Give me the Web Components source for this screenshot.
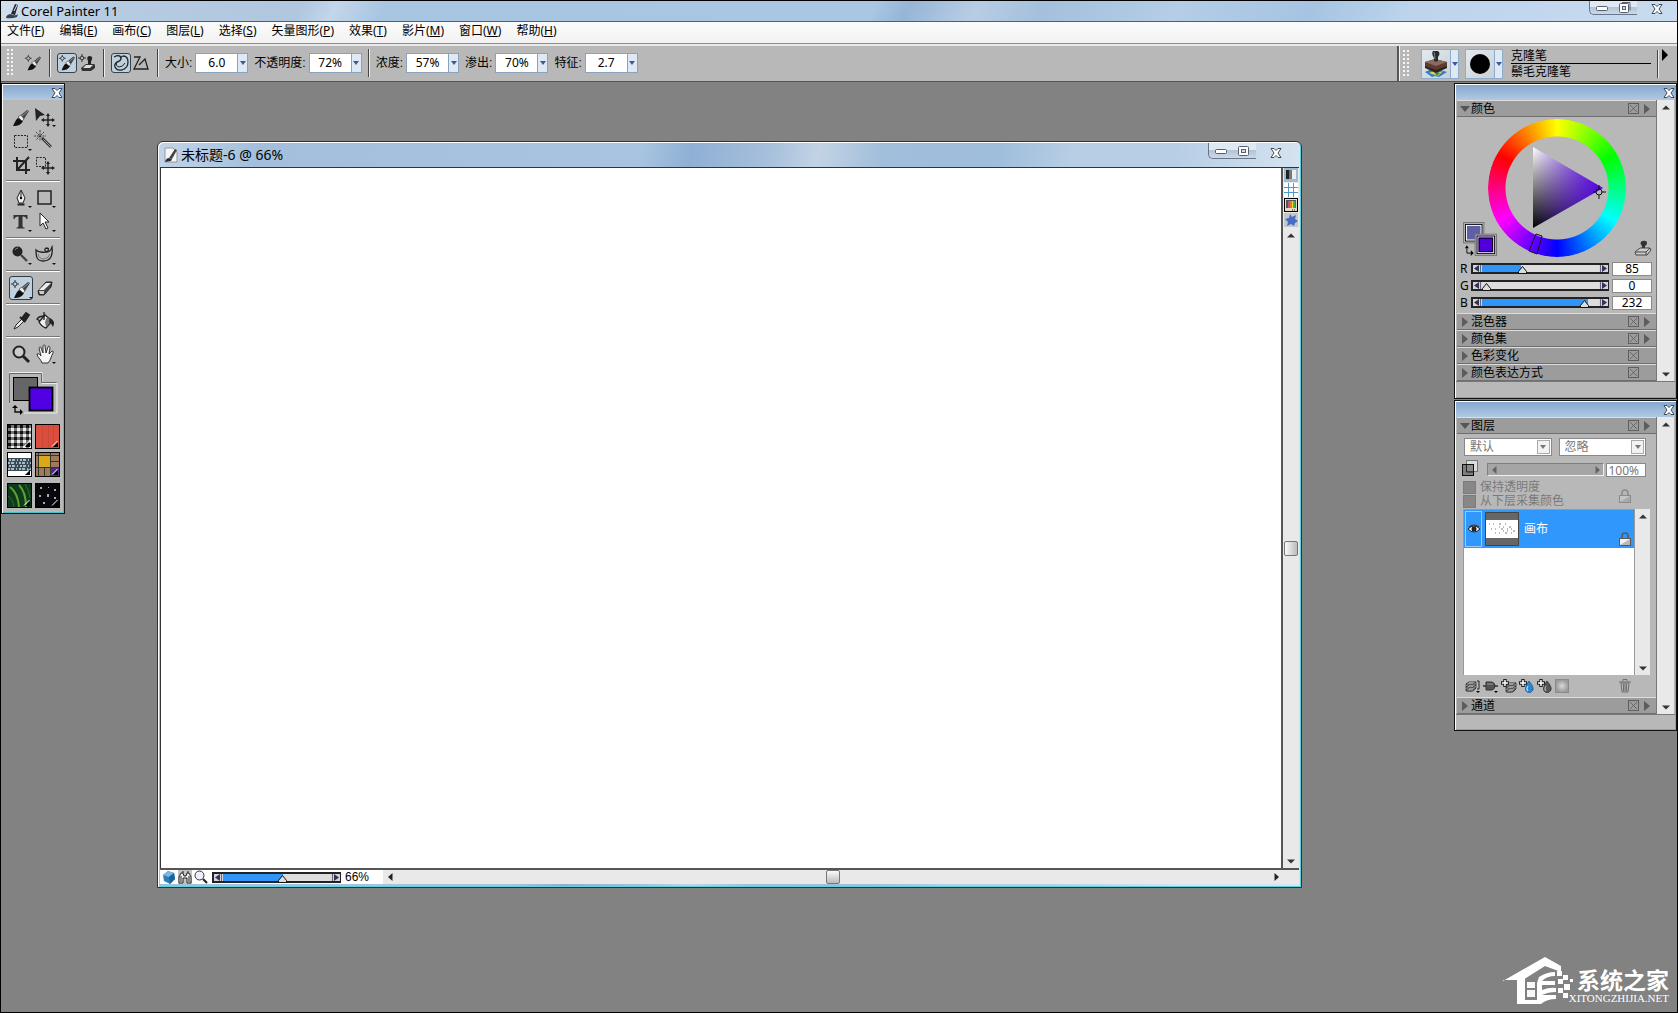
<!DOCTYPE html>
<html lang="zh-CN">
<head>
<meta charset="utf-8">
<title>Corel Painter 11</title>
<style>
  html, body { margin: 0; height: 100%; background: #000; }
  body { font: 12px/16px "Noto Sans", "Noto Sans CJK SC", sans-serif; color: #000; overflow: hidden; }
</style>
</head>
<body>
<painter-app></painter-app>
<script>
const BASE = `
  *, *::before, *::after { box-sizing: border-box; }
  button, input, select { font: inherit; color: inherit; margin: 0; padding: 0; border: 0; border-radius: 0; background: none; outline: 0; }
  button { display: grid; place-items: center; }
  h1, h2 { margin: 0; font: inherit; }
`;

/* Base element: renders css() and html() into an open shadow root. */
class PainterElement extends HTMLElement {
  constructor() { super(); this.attachShadow({ mode: 'open' }); }
  connectedCallback() {
    const t = document.createElement('template');
    t.innerHTML = `<style>${BASE}${this.css()}</style>${this.html()}`;
    this.shadowRoot.replaceChildren(t.content.cloneNode(true));
  }
  attr(name, fallback = '') { return this.getAttribute(name) ?? fallback; }
  css() { return ':host{display:block}'; }
  html() { return '<slot></slot>'; }
}

const BRUSH = '<path d="M4 21c1-1 2-6 5-8l5 3c-2 4-5 5-10 5z" fill="#111"/><path d="M9 12l3-2 3 4-2 2z" fill="#eee" stroke="#333" stroke-width=".6"/><path d="M12 10l6-5 2 1-5 8z" fill="#444"/><path d="M13 11l6-5" stroke="#aaa" stroke-width=".8"/>';
const TARGET = '<circle cx="5" cy="7" r="2" fill="none" stroke="#333"/><path d="M5 3v2M5 9v2M1 7h2M7 7h2" stroke="#333"/>';
const FLY = '<path d="M19 20h4l-2 2z" fill="#111"/>';
const MOVE = '<path d="M15 9v12M9 15h12" stroke="#222" stroke-width="1.5"/><path d="M13 11l2-3 2 3zM13 19l2 3 2-3zM11 13l-3 2 3 2zM19 13l3 2-3 2z" fill="#222"/>';
const LOCK = '<path d="M3 7V4q0-3 3-3t3 3v3" fill="none" stroke="C" stroke-width="1.6"/><rect x=".5" y="6.500" width="11" height="7" fill="F" stroke="C"/><path d="M1 13l10-6v6z" fill="G"/>';
const BOOK = '<path d="M1 11l3-2h7l-3 2zM1 8l3-2h7l-3 2zM1 5l3-2h7L8 5z" fill="#fff" stroke="#333"/><path d="M1 5v7q4 1 7 0l3-3V3" fill="none" stroke="#333" stroke-width=".8"/>';
const PLUS = '<path d="M4 0v8M0 4h8" stroke="#222" stroke-width="3.500"/><path d="M4 1v6M1 4h6" stroke="#fff" stroke-width="1.500"/>';
/* name: [width, height, markup, viewBox] */
const ICONS = {
  app: [14, 16, '<path d="M1 15q0-3 4-4l3 1q3 1 5-1l-1 3q-5 2-11 1z" fill="#38424f"/><path d="M6 11l4-10 3 1-3 10z" fill="#25272c"/><path d="M9 8l3-6" stroke="#dfe7f0" fill="none"/>'],
  doc: [14, 16, '<path d="M1 1h8l4 4v10H1z" fill="#f6f6f6" stroke="#999"/><path d="M1 15q1-4 4-4l3 1-1 2z" fill="#27303a"/><path d="M5 11l6-9 2 1-5 9z" fill="#444"/>'],
  min: [12, 6, '<rect x=".5" y=".5" width="11" height="4" rx="1" fill="#fff" stroke="#56606e"/>'],
  max: [12, 10, '<rect x=".5" y=".5" width="10" height="9" rx="1" fill="#fff" stroke="#56606e"/><rect x="3.500" y="3.500" width="4" height="3" fill="#cfdcea" stroke="#56606e"/>'],
  restore: [12, 11, '<path d="M3 .5h8v8" fill="none" stroke="#56606e"/><rect x=".5" y="1.500" width="9" height="9" rx="1" fill="#fff" stroke="#56606e"/><rect x="3.500" y="4.500" width="3" height="3" fill="#cfdcea" stroke="#56606e"/>'],
  close: [12, 10, '<path d="M1 .5h3l2 2 2-2h3L8 5l3 4.500H8l-2-2-2 2H1L4 5z" fill="#fff" stroke="#414a58"/>'],
  brush: [24, 24, BRUSH],
  clonebrush: [18, 18, TARGET + BRUSH, '0 2 21 21'],
  toolbrush: [24, 24, TARGET + BRUSH + FLY],
  stampbrush: [18, 18, '<circle cx="4" cy="4" r="1.800" fill="none" stroke="#333"/><path d="M4 0v2M4 6v2M0 4h2M6 4h2" stroke="#333"/><path d="M10 7q-2-4 1-5 4 0 3 3l-1 3v3H10z" fill="#222"/><path d="M3 14l5-4h8l1 1v3l-4 3H4z" fill="#333"/><path d="M5 14l3-3h7l-3 3z" fill="#ddd"/>'],
  freehand: [18, 18, '<path d="M2 3q6-3 7 1 0 3-4 4-3 2-2 5 2 4 7 3 6-2 6-8 0-6-5-6-3 1-2 4" fill="none" stroke="#222" stroke-width="1.300"/><path d="M5 8q-2 4 2 5 4 0 6-4" fill="none" stroke="#222"/>'],
  poly: [18, 18, '<path d="M2 3h6L2 15h14L13 5l-6 6" fill="none" stroke="#222" stroke-width="1.300"/>'],
  move: [24, 24, '<path d="M2 3l10 7-5 1-4 5z" fill="#222"/>' + MOVE + FLY],
  marquee: [24, 24, '<rect x="5.500" y="6.500" width="13" height="12" fill="none" stroke="#222" stroke-dasharray="2 1.200"/>' + FLY],
  wand: [24, 24, '<path d="M9 9l9 9" stroke="#333" stroke-width="2.600"/><path d="M10 10l8 8" stroke="#ccc" stroke-width=".7"/><path d="M7 1v11M1 7h12M3 3l8 8M11 3l-8 8" stroke="#222" stroke-width=".8" stroke-dasharray="2 .8"/>'],
  crop: [24, 24, '<path d="M8 4v13h13M4 8h13v13M9 16L20 4" fill="none" stroke="#222" stroke-width="2"/><path d="M9 16L20 4" stroke="#222"/>'],
  selmove: [24, 24, '<rect x="3.500" y="4.500" width="9" height="9" fill="none" stroke="#222" stroke-dasharray="2 1.200"/>' + MOVE],
  pen: [24, 24, '<path d="M12 4l4 8-2 5h-4l-2-5z" fill="#eee" stroke="#222"/><path d="M12 5v7" stroke="#222"/><circle cx="12" cy="12" r="1.200"/><path d="M8.500 17.500h7v2h-7z" fill="#222"/>' + FLY],
  rect: [24, 24, '<rect x="5" y="5" width="13" height="13" fill="none" stroke="#222" stroke-width="1.500"/>' + FLY],
  pointer: [24, 24, '<path d="M7 3v13l3-3 3 6 2-1-3-6h4z" fill="#fff" stroke="#222"/>' + FLY],
  text: [24, 24, '<path d="M4.500 5h14v4h-1q-.5-2.500-3-2.500h-1V16q0 1.500 2 1.500v1h-8v-1q2 0 2-1.500V6.500h-1Q6 6.500 5.500 9h-1z" fill="#333"/>' + FLY],
  dodge: [24, 24, '<circle cx="8.500" cy="8.500" r="5" fill="#222"/><path d="M6 7q1-2 3-2" stroke="#888" fill="none"/><path d="M12 12l6 6" stroke="#444" stroke-width="2.400"/>' + FLY],
  horn: [24, 24, '<path d="M3 7q3 3 9 2c5-1 4-4 1-4-2 1-1 4 1 4 4 0 4-3 5-5 1 8-1 14-9 14-7 0-7-6-7-11z" fill="#bbb" stroke="#222" stroke-width="1.300"/><path d="M5 11q1 5 6 5 5-1 6-5" fill="none" stroke="#777"/>' + FLY],
  eraser: [24, 24, '<path d="M5 15L13 6h6l-1 5-7 8H6z" fill="#444" stroke="#222"/><path d="M6 14l7-7h5l-7 7z" fill="#eee"/><path d="M6 15h5v3H7z" fill="#ccc"/>'],
  dropper: [24, 24, '<path d="M5 20l2-4 6-6 2 2-6 6z" fill="#eee" stroke="#222"/><path d="M11 8l5 5M13 9l4-5 3 2-4 6z" fill="#222" stroke="#222" stroke-width="1.800"/>'],
  bucket: [24, 24, '<path d="M6 13l6-7 7 6-6 7q-4-1-7-6z" fill="#eee" stroke="#222" stroke-width="1.300"/><path d="M14 8l4 4-5 6-1-5z" fill="#777"/><path d="M7 12L4 10q2-3 8-3M11 3v8" fill="none" stroke="#222" stroke-width="1.300"/><path d="M17 9q6 3 3 9-1-3-4-5z" fill="#222"/>'],
  zoom: [24, 24, '<circle cx="10" cy="10" r="5.500" fill="#ccc" stroke="#222" stroke-width="2"/><path d="M14 14l6 6" stroke="#222" stroke-width="3"/>'],
  hand: [24, 24, '<path d="M9 21c-1-4-5-6-5-9 2-1 3 1 4 2L6 6c1-2 2-1 2 0l2 5V4c1-2 2-1 2 0l1 7 2-6c1-2 2 0 2 1l-1 6 3-3c2 0 1 1 1 2-2 3-2 7-5 10z" fill="#f4f4f4" stroke="#222" stroke-width=".9"/>' + FLY],
  stamp: [18, 17, '<path d="M8 6Q5 3 8 1q5-1 5 2 0 2-2 3v4H8z" fill="#333"/><path d="M1 12l5-4h10l1 2-4 5H2z" fill="#ccc" stroke="#444"/><path d="M2 12h10l4-4M12 12v3" fill="none" stroke="#444"/>'],
  bigstamp: [28, 28, '<path d="M3 22l9-4 13 4-8 5-4-1-3 1z" fill="#2f7fc4"/><path d="M7 23l5-2 3 2 6-2-5 5z" fill="#e8d24a"/><path d="M12 22l6 1-3 3z" fill="#3b8d4a"/><path d="M3 12l10-3 12 3v5l-11 5L3 17z" fill="#5e3a30"/><path d="M3 12l10-3 12 3-11 4z" fill="#8b6a60"/><path d="M3 16l11 4 11-4v2l-11 5L3 18z" fill="#30231f"/><path d="M12 8Q9 3 11 1h5q3 2 0 6v4q-2 1-4 0z" fill="#272b30"/><path d="M12 2q1 4 1 7" stroke="#788" fill="none"/>'],
  dot: [28, 28, '<circle cx="14" cy="14" r="10"/>'],
  tri: [7, 12, '<path d="M0 0l6 6-6 6z" fill="#000"/>'],
  up: [8, 5, '<path d="M0 4.500L4 .5l4 4z" fill="#333"/>'],
  down: [8, 5, '<path d="M0 .5h8l-4 4z" fill="#333"/>'],
  left: [5, 8, '<path d="M4.500 0v8L0 4z" fill="#222"/>'],
  right: [5, 8, '<path d="M.5 0v8L5 4z" fill="#222"/>'],
  endleft: [7, 7, '<path d="M5 0v7L0 3.500z" fill="#335"/><path d="M6.500 0v7" stroke="#667"/>'],
  endright: [7, 7, '<path d="M2 0v7l5-3.500z" fill="#335"/><path d="M.5 0v7" stroke="#667"/>'],
  graydown: [10, 6, '<path d="M0 0h10L5 6z" fill="#555"/>'],
  grayright: [6, 10, '<path d="M0 0l6 5-6 5z" fill="#5c5c5c"/>'],
  blue: [6, 4, '<path d="M0 0h6L3 4z" fill="#41579c"/>'],
  graysmall: [6, 4, '<path d="M0 0h6L3 4z" fill="#777"/>'],
  xbox: [11, 11, '<rect x=".5" y=".5" width="10" height="10" fill="none" stroke="#5e5e5e"/><path d="M2 2l7 7M9 2l-7 7" stroke="#5e5e5e" stroke-width=".8"/>'],
  composite: [16, 16, '<rect x="4.500" y=".5" width="11" height="11" fill="#ddd" stroke="#777"/><rect x=".5" y="4.500" width="11" height="11" fill="#555" fill-opacity=".6" stroke="#111"/><path d="M4.500 5v7h7" fill="none" stroke="#222"/>'],
  lockoff: [12, 14, LOCK.replace(/C/g, '#8b8b8b').replace('F', '#c4c4c4').replace('G', '#aaa')],
  lock: [12, 14, LOCK.replace(/C/g, '#5a5a5a').replace('F', '#f2f2f2').replace('G', '#b8b8b8')],
  eye: [12, 10, '<path d="M0 5q6-6 12 0-6 6-12 0z" fill="#fff" stroke="#222"/><circle cx="6" cy="5" r="2.500" fill="#222"/><path d="M1 3q5-4 10 0" fill="none" stroke="#5a3020" stroke-width="1.200"/>'],
  ball: [14, 14, '<path d="M1 5l5-4 6 2 1 6-5 5-6-3z" fill="#2c7fbc"/><path d="M1 5l5-4 6 2-5 4z" fill="#7db7de"/><path d="M7 7l5-4 1 6-5 5z" fill="#1a639d"/>'],
  bino: [14, 14, '<rect width="14" height="14" fill="#c4c4c4"/><path d="M1 13V7l2-4h2l1 3h2l1-3h2l2 4v6H9V8H5v5z" fill="#eee" stroke="#222"/><path d="M3 6v6M11 6v6M4 2h2M9 2h2" stroke="#222"/>'],
  lens: [14, 14, '<circle cx="5.500" cy="5.500" r="4.500" fill="#eef" stroke="#333"/><path d="M9 9l4 4" stroke="#222" stroke-width="2.200"/>'],
  tracing: [14, 14, '<rect width="14" height="14" fill="#9dbcd4"/><path d="M2 2h10v9H2z" fill="#eee"/><path d="M2 2h6v9H2z" fill="#777"/><path d="M2 2h3v9H2z" fill="#222"/>'],
  grid: [14, 14, '<rect width="14" height="14" fill="#fff"/><path d="M4.500 0v14M9.500 0v14M0 4.500h14M0 9.500h14" stroke="#4d9ac4"/>'],
  colors: [14, 14, '<rect x=".5" y=".5" width="13" height="13" fill="#e8ddc4" stroke="#000"/><path d="M2 2h10v8H2z" fill="#555"/><path d="M4 3h2v7H4z" fill="#c4527c"/><path d="M6 3h2v7H6z" fill="#e77b21"/><path d="M8 3h1.500v7H8z" fill="#f4d330"/><path d="M9.500 3h2v7h-2z" fill="#3eaf54"/><path d="M8 12h4" stroke="#222" stroke-dasharray="1 1"/>'],
  star: [14, 14, '<rect width="14" height="14" fill="#c5c8cb"/><path d="M6 1l2 3 4-2-1 4 3 2-3 2-1 3-3-2-4 2 1-4-3-3 4-1z" fill="#466cc4"/>'],
  layers: [16, 14, BOOK + '<path d="M12 2h2v8h-2" fill="none" stroke="#222"/><path d="M11 12h4l-2 2z"/>'],
  plug: [16, 14, '<path d="M3 3h6q3 1 3 4t-3 4H3z" fill="#555" stroke="#333"/><path d="M4 5h6" stroke="#999"/><path d="M0 7h3M11 7h4" stroke="#333" stroke-width="1.500"/><path d="M11 12h4l-2 2z"/>'],
  newlayer: [16, 14, '<g transform="translate(4 1)">' + BOOK + '</g>' + PLUS],
  water: [16, 14, '<path d="M10 2q5 6 4 9-2 4-6 2-4-3 2-11z" fill="#2787d4" stroke="#174f8b" stroke-width=".7"/><path d="M9 7q-2 3 0 5" stroke="#a9dcff" stroke-width="1.300" fill="none"/>' + PLUS],
  ink: [16, 14, '<path d="M10 2q5 6 4 9-2 4-6 2-4-3 2-11z" fill="#555" stroke="#222" stroke-width=".7"/><path d="M9 7q-2 3 0 5" stroke="#aaa" stroke-width="1.300" fill="none"/>' + PLUS],
  mask: [14, 14, '<defs><radialGradient id="m"><stop stop-color="#d8d8d8"/><stop offset="1" stop-color="#999"/></radialGradient></defs><rect x=".5" y=".5" width="13" height="13" fill="url(#m)" stroke="#8a8a8a"/>'],
  trash: [12, 14, '<path d="M2 4h8l-1 9H3zM0 3h12M4 2V.5h4V2M4.500 5v7M7.500 5v7M6 5v7" fill="none" stroke="#6d6d6d"/>'],
  t1: [23, 23, '<defs><pattern id="p" width="6" height="6" patternUnits="userSpaceOnUse"><rect width="6" height="6" fill="#777"/><path d="M0 0h3v3H0z" fill="#111"/><path d="M3 3h3v3H3z" fill="#eee"/></pattern></defs><rect width="23" height="23" fill="url(#p)"/>'],
  t2: [23, 23, '<rect width="23" height="23" fill="#d94e3d"/><path d="M6.500 0v23M12.500 0v23M17.500 0v23" stroke="#c94839"/>'],
  t3: [23, 23, '<rect width="23" height="23" fill="#fff"/><rect y="5" width="23" height="13" fill="#3b4a55"/><path d="M1 7h21M0 10h23M1 13h21M0 16h23" stroke="#a5bcc8" stroke-width="2" stroke-dasharray="2 1 3 2 1 2"/>'],
  t4: [23, 23, '<rect width="23" height="23" fill="#a07860"/><rect x="3" y="3" width="11" height="11" fill="#dba81a"/><path d="M0 2.500h23M2.500 0v23M0 14.500h23M14.500 0v23M14 8.500h9M8.500 15v8" stroke="#2b3a20"/><rect x="15" y="15" width="8" height="8" fill="#4a2a86"/>'],
  t5: [23, 23, '<rect width="23" height="23" fill="#0d3a1d"/><path d="M2 3q8 6 9 20M11 1q7 7 7 22" fill="none" stroke="#5da32c" stroke-width="2"/><path d="M0 12q5 3 6 11M17 0q4 6 5 14" fill="none" stroke="#2f6d28"/>'],
  t6: [23, 23, '<rect width="23" height="23" fill="#08080c"/><path d="M4 3h2v2H4zM11 10h2v3h-2zM18 5h2v2h-2zM3 11h2v2H3zM7 18h2v2H7zM18 13h2v2h-2zM12 3h1v1h-1z" fill="#a4aab4"/>'],
};
for (let i = 1; i < 7; i++) ICONS['t' + i][2] += '<path d="M22 17v5h-5z" fill="#000"/><path d="M16 21.500L21.500 16" stroke="#fff"/>';

class UiIcon extends PainterElement {
  css() { return ':host{display:block;line-height:0;flex:none} svg{display:block}'; }
  html() {
    const [w, h, body, box] = ICONS[this.attr('name')];
    return `<svg width="${w}" height="${h}" viewBox="${box || `0 0 ${w} ${h}`}" fill="#000" aria-hidden="true">${body}</svg>`;
  }
}
const icon = n => `<ui-icon name="${n}"></ui-icon>`;
const btn = (n, label, cls = '') => `<button class="${cls}" aria-label="${label}">${icon(n)}</button>`;

/* Minimise, restore and close buttons of a window frame. */
class WindowControls extends PainterElement {
  css() { return `
    :host { display: flex; align-items: flex-start; gap: 12px; align-self: stretch; }
    .pair { display: flex; height: 16px; width: 48px; border: 1px solid #67778b; border-width: 0 0 1px 1px; border-radius: 0 0 0 5px;
      background: linear-gradient(#dfe9f3 50%, #b3c4d6 50%, #ccd9e7); }
    .pair button { flex: 1; } .pair button:first-child { padding-top: 3px; }
    .close { width: 16px; height: 16px; margin-top: 2px; }
    :host([kind=restore]) .pair { height: 14px; } :host([kind=restore]) .close { margin-top: 0; }`; }
  html() { return `<div class="pair">${btn('min', '最小化')}${btn(this.attr('kind', 'max'), '还原')}</div>${btn('close', '关闭', 'close')}`; }
}

class TitleBar extends PainterElement {
  css() { return `
    :host { display: flex; align-items: center; height: 20px; padding: 0 12px 0 4px; gap: 2px; font-size: 13px;
      background: linear-gradient(115deg, #d3e0ee 0, #b7cce2 5%, #b1c7df 18%, #c3d6ea 20%, #a8c5e2 23%, #a9c6e2 52%, #96b5d7 54%, #b8cde4 58%, #a5c0dc 62%, #b5cde6 70%, #a6c4e2 78%, #bdd4ec 84%, #c8dbef 100%); }
    h1 { flex: 1; white-space: nowrap; }`; }
  html() { return `${icon('app')}<h1>Corel Painter 11</h1><window-controls kind="restore"></window-controls>`; }
}

class MenuBar extends PainterElement {
  css() { return `
    :host { display: block; height: 23px; background: linear-gradient(#fbfbfb, #f2f2f2); border-top: 1px solid #4f5f70; border-bottom: 1px solid #8c8c93; }
    nav { display: flex; gap: 15px; padding: 1px 6px; }
    button { line-height: 16px; display: block; white-space: nowrap; }`; }
  html() {
    const items = ['文件F', '编辑E', '画布C', '图层L', '选择S', '矢量图形P', '效果T', '影片M', '窗口W', '帮助H'];
    return `<nav>${items.map(s => `<button>${s.slice(0, -1)}(<u>${s.slice(-1)}</u>)</button>`).join('')}</nav>`;
  }
}

/* Labelled number box with a drop-down arrow. */
class NumberField extends PainterElement {
  css() { return `
    :host { display: flex; align-items: center; gap: 3px; }
    label { white-space: nowrap; font-family: "Liberation Sans", "Noto Sans CJK SC", sans-serif; }
    .box { display: flex; width: 53px; height: 20px; border: 1px solid #8ba2bd; background: #fff; }
    input { width: 41px; text-align: center; }
    button { width: 10px; border-left: 1px solid #8ba2bd; background: #dfe9f4; }`; }
  html() { return `<label for="v">${this.attr('label')}:</label><div class="box"><input id="v" value="${this.attr('value')}">${btn('blue', '更多')}</div>`; }
}

class PropertyBar extends PainterElement {
  css() { return `
    :host { display: flex; height: 38px; background: #b8b8b8; border-top: 2px solid #e8e8e8; border-bottom: 1px solid #555; }
    .bar { display: flex; align-items: center; gap: 6px; padding-left: 6px; }
    .main { flex: 1; min-width: 0; padding-bottom: 1px; }
    .grip { width: 7px; height: 28px; flex: none; margin-right: 3px; background: radial-gradient(circle at 1px 1px, #f4f4f4 1px, transparent 1px) 0 0 / 4px 4px; }
    .sep { width: 2px; height: 28px; flex: none; border-left: 1px solid #444; background: #eee; }
    .pair { display: flex; }
    .tool { width: 20px; height: 20px; flex: none; }
    .on { border: 1px solid #33424f; border-radius: 3px; background: #bfd0de; }
    .right { width: 280px; padding-left: 4px; border-left: 2px solid #555; box-shadow: inset 1px 0 #f4f4f4; }
    .right .grip { margin-right: 5px; }
    .pick { display: flex; border: 1px solid #8faccb; background: linear-gradient(135deg, #e3eaf1, #c5cbd1); height: 30px; }
    .pick button:first-child { width: 28px; }
    .pick button + button { width: 8px; border-left: 1px solid #8faccb; background: #dfe9f4; }
    .names { flex: 1; line-height: 15px; margin-left: 2px; }
    .names div + div { border-top: 1px solid #000; }
    .more { align-self: flex-start; padding: 3px 8px 0 0; margin-left: -3px; }`; }
  html() { return `
    <div class="bar main"><div class="grip"></div>
      ${btn('clonebrush', '画笔', 'tool')}<div class="sep"></div>
      <div class="pair">${btn('clonebrush', '克隆画笔', 'tool on')}${btn('stampbrush', '克隆源', 'tool')}</div><div class="sep"></div>
      <div class="pair">${btn('freehand', '自由手绘', 'tool on')}${btn('poly', '直线', 'tool')}</div><div class="sep"></div>
      <number-field label="大小" value="6.0"></number-field>
      <number-field label="不透明度" value="72%"></number-field><div class="sep"></div>
      <number-field label="浓度" value="57%"></number-field>
      <number-field label="渗出" value="70%"></number-field>
      <number-field label="特征" value="2.7"></number-field>
    </div>
    <div class="bar right"><div class="grip"></div>
      <div class="pick">${btn('bigstamp', '画笔类别')}${btn('blue', '类别列表')}</div>
      <div class="pick">${btn('dot', '画笔变量')}${btn('blue', '变量列表')}</div>
      <div class="names"><div>克隆笔</div><div>鬃毛克隆笔</div></div>
      <div class="sep"></div>${btn('tri', '菜单', 'more')}
    </div>`; }
}

/* Floating palette frame; its content is slotted below a slim title strip. */
class PaletteFrame extends PainterElement {
  css() { return `
    :host { display: block; background: #b8b8b8; border: 1px solid #111; box-shadow: inset 1px 1px #fff, inset -1px -1px #3fc3d0; padding: 1px 1px 1px 1px; }
    .strip { display: flex; justify-content: flex-end; align-items: center; height: 15px; background: linear-gradient(#86a8cd, #b0c9e4); }`; }
  html() { return `<div class="strip">${btn('close', '关闭')}</div><slot></slot>`; }
}

class ToolPalette extends PainterElement {
  css() { return `
    .group { display: grid; grid-template-columns: 24px 24px; margin: 0 3px; padding: 4px 3px; border-bottom: 1px solid #fff; box-shadow: 0 -1px #777 inset; }
    .group:first-child { padding-top: 5px; }
    .group.last { border: 0; box-shadow: none; }
    .group button { width: 24px; height: 24px; }
    .on { border: 1px solid #2f3d49; border-radius: 3px; background: #bfd0de; }
    .swatch { display: block; margin: 2px 0 8px 6px; }
    .tex { display: grid; grid-template-columns: 25px 25px; gap: 3px; padding: 0 0 6px 4px; }
    .tex + .tex { padding-bottom: 4px; }
    .tex button { width: 25px; height: 25px; border: 1px solid #000; overflow: hidden; }`; }
  html() {
    const groups = [['brush', 'move', 'marquee', 'wand', 'crop', 'selmove'], ['pen', 'rect', 'text', 'pointer'], ['dodge', 'horn'], ['toolbrush', 'eraser'], ['dropper', 'bucket'], ['zoom', 'hand']];
    const tex = a => `<div class="tex">${a.map(n => btn(n, '材质')).join('')}</div>`;
    return `<palette-frame>
      ${groups.map((g, i) => `<div class="group ${i === 5 ? 'last' : ''}">${g.map(n => btn(n, n, n === 'toolbrush' ? 'on' : '')).join('')}</div>`).join('')}
      <svg class="swatch" width="50" height="44" viewBox="0 0 50 44">
        <path d="M0 32V.5h33v11h15V41H15" fill="none" stroke="#eee"/><path d="M.5 31V1.500h32v9h15" fill="none" stroke="#666"/>
        <rect x="4.500" y="5.500" width="24" height="23" fill="#666" stroke="#000"/>
        <rect x="20.500" y="15.500" width="23" height="23" fill="#5100e4" stroke="#000" stroke-width="1.800"/>
        <path d="M6 35v5h6" fill="none" stroke="#111" stroke-width="1.400"/><path d="M3 36l3-3 3 3zM11 37l3 3-3 3z"/>
      </svg>
      ${tex(['t1', 't2', 't3', 't4'])}${tex(['t5', 't6'])}
    </palette-frame>`;
  }
}

/* Beveled slider with arrow ends around a native range input. */
class BevelSlider extends PainterElement {
  css() { return `
    :host { display: flex; height: 11px; border: 2px solid #222; border-right-width: 1px; background: #ddd; min-width: 0; }
    i { width: 9px; display: grid; place-items: center; background: #d4d4de; flex: none; }
    input { -webkit-appearance: none; appearance: none; flex: 1; min-width: 0; width: 0; height: 9px; display: block;
      background: linear-gradient(90deg, #2f95fb ${this.attr('value')}%, transparent ${this.attr('value')}%) 0 0 / 100% 7px no-repeat; }
    input::-webkit-slider-thumb { -webkit-appearance: none; width: 9px; height: 8px; margin-top: 1px;
      background: url("data:image/svg+xml,%3Csvg xmlns='http://www.w3.org/2000/svg' width='9' height='8'%3E%3Cpath d='M4.500 .5l4 5v2h-8v-2z' fill='%23ddd' stroke='%23111'/%3E%3C/svg%3E") no-repeat; }
    :host([off]) { border: 1px solid #7f7f7f; border-bottom-color: #eee; border-right-color: #eee; background: #a5a5a5; height: 13px; }
    :host([off]) input { visibility: hidden; } :host([off]) i { background: none; opacity: .5; width: 12px; }`; }
  html() {
    const end = this.hasAttribute('off') ? '' : 'end';
    return `<i>${icon(end + 'left')}</i><input type="range" min="0" max="100" value="${this.attr('value')}" aria-label="${this.attr('label')}"><i>${icon(end + 'right')}</i>`;
  }
}

class ChannelRow extends PainterElement {
  css() { return `
    :host { display: grid; grid-template-columns: 8px 1fr 40px; gap: 3px; align-items: center; height: 17px; padding: 0 4px 0 3px; }
    label { line-height: 16px; }
    .v { width: 40px; height: 14px; border: 1px solid #8a8a8a; background: #fff; text-align: center; line-height: 14px; padding-top: 1px; }`; }
  html() {
    const v = +this.attr('value');
    return `<label for="v">${this.attr('label')}</label><bevel-slider label="${this.attr('label')}" value="${Math.round(v / 2.55)}"></bevel-slider><input class="v" id="v" value="${v}">`;
  }
}

/* Collapsible section: heading bar plus optional slotted body. */
class PanelSection extends PainterElement {
  css() { return `
    :host { display: block; }
    header { display: flex; align-items: center; gap: 5px; height: 17px; padding: 0 6px 0 3px; background: #9c9c9c; border-top: 1px solid #ddd; border-bottom: 1px solid #6e6e6e; }
    .arrow { width: 10px; display: grid; place-items: center; flex: none; }
    h2 { flex: 1; margin-left: -4px; line-height: 15px; } .menu { width: 6px; }`; }
  html() { return `<header><button class="arrow" aria-label="展开">${icon(this.hasAttribute('open') ? 'graydown' : 'grayright')}</button><h2>${this.attr('label')}</h2>
    ${btn('xbox', '关闭')}<button class="menu" aria-label="菜单">${this.hasAttribute('nomenu') ? '' : icon('grayright')}</button></header><slot></slot>`; }
}

class ScrollStrip extends PainterElement {
  css() { return `
    :host { display: flex; flex-direction: column; justify-content: space-between; align-items: center; background: #e9e9e9; }
    :host([row]) { flex-direction: row; }
    button { width: 14px; height: 14px; }
    .thumb { width: 14px; height: 15px; border: 1px solid #777; border-radius: 2px; background: linear-gradient(90deg, #fafafa, #bbb); }
    :host([row]) .thumb { height: 14px; background: linear-gradient(#fafafa, #bbb); }`; }
  html() {
    const row = this.hasAttribute('row');
    return btn(row ? 'left' : 'up', '向前') + (this.hasAttribute('thumb') ? '<div class="thumb" role="scrollbar"></div>' : '') + btn(row ? 'right' : 'down', '向后');
  }
}

class ColorWheel extends PainterElement {
  css() { return `
    :host { display: grid; height: 143px; padding: 0 3px 0 6px; }
    .wheel, svg, .sw, .stamp { grid-area: 1 / 1; }
    .wheel { width: 138px; height: 138px; place-self: start center; margin: 2px 0 0 -3px; border-radius: 50%;
      background: conic-gradient(#ff0, #0f0 60deg, #0ff 120deg, #00f 180deg, #f0f 240deg, #f00 300deg, #ff0);
      -webkit-mask: radial-gradient(circle, transparent 51px, #000 52px); mask: radial-gradient(circle, transparent 51px, #000 52px); }
    svg { z-index: 1; }
    svg.tri { place-self: start center; margin: 2px 0 0 -3px; } .sw { place-self: end start; margin-bottom: 3px; } .stamp { place-self: end; padding: 0 1px 3px 0; }`; }
  html() { return `<div class="wheel"></div>
    <svg class="tri" width="138" height="138" viewBox="0 0 138 138">
      <defs><linearGradient id="v" x1="0" y1="0" x2="0" y2="1"><stop stop-color="#fff"/><stop offset="1"/></linearGradient>
      <linearGradient id="h"><stop stop-color="#5500e8" stop-opacity="0"/><stop offset="1" stop-color="#5500e8"/></linearGradient></defs>
      <path d="M45 28l70 41-70 40z" fill="url(#v)"/><path d="M45 28l70 41-70 40z" fill="url(#h)"/>
      <circle cx="111" cy="73" r="3" fill="none" stroke="#111"/><path d="M111 66v4M111 76v4M105 73h3M114 73h4" stroke="#111"/>
      <path d="M48 115l6 2-5 18-8-3z" fill="none" stroke="#111"/>
    </svg>
    <svg class="sw" width="35" height="35" viewBox="0 0 36 36">
      <rect x=".5" y=".5" width="21" height="21" fill="#b8b8b8" stroke="#777"/><rect x="2.500" y="2.500" width="17" height="17" fill="#5f5fa5" stroke="#000"/><rect x="3.500" y="3.500" width="15" height="15" fill="none" stroke="#fff"/>
      <rect x="12.500" y="12.500" width="22" height="22" fill="#b8b8b8" stroke="#777"/><rect x="14.500" y="14.500" width="18" height="18" fill="#5100dc" stroke="#000"/><rect x="15.500" y="15.500" width="16" height="16" fill="none" stroke="#fff"/><rect x="16.500" y="16.500" width="14" height="14" fill="none" stroke="#000"/>
      <path d="M4 27v5h5" fill="none" stroke="#111"/><path d="M2 27l2-3 2 3zM8 29l3 3-3 3z"/>
    </svg><div class="stamp">${icon('stamp')}</div>`; }
}

class ColorPanel extends PainterElement {
  css() { return `
    .cols { display: flex; padding: 0 1px; } .main { flex: 1; border-right: 1px solid #777; }
    .rows { padding-bottom: 2px; }
    scroll-strip { width: 17px; } .foot { height: 16px; border-top: 1px solid #777; }`; }
  html() { return `<palette-frame><div class="cols"><div class="main">
      <panel-section label="颜色" open><color-wheel></color-wheel>
        <div class="rows"><channel-row label="R" value="85"></channel-row><channel-row label="G" value="0"></channel-row><channel-row label="B" value="232"></channel-row></div></panel-section>
      <panel-section label="混色器"></panel-section><panel-section label="颜色集"></panel-section>
      <panel-section label="色彩变化" nomenu></panel-section><panel-section label="颜色表达方式" nomenu></panel-section>
    </div><scroll-strip></scroll-strip></div><div class="foot"></div></palette-frame>`; }
}

class LayerList extends PainterElement {
  css() { return `
    :host { display: flex; height: 166px; margin: 0 6px; }
    ul { flex: 1; margin: 0; padding: 0; list-style: none; background: #fff; border: 1px solid #999; border-bottom: 0; }
    li { display: flex; height: 38px; gap: 3px; padding-left: 1px; background: #3097fc; color: #fff; align-items: center; }
    .eye { width: 17px; height: 36px; border: 1px solid #9ccbf7; }
    .name { flex: 1; padding-left: 2px; }
    .lk { align-self: flex-end; padding: 0 3px 2px 0; }
    scroll-strip { width: 15px; }`; }
  html() { return `<ul><li>${btn('eye', '可见', 'eye')}
    <svg width="34" height="34" viewBox="0 0 34 34"><path d="M.5 .5h33v33H.5z" fill="#666" stroke="#444"/><path d="M1 8h32v18H1z" fill="#fff"/>
      <path d="M4 12h20M6 17h24M14 15h14M10 21h18M18 19h12" stroke="#777" stroke-width="1" stroke-dasharray="1 3 1 5 2 4"/></svg>
    <span class="name">画布</span><span class="lk">${icon('lock')}</span></li></ul><scroll-strip></scroll-strip>`; }
}

class LayersPanel extends PainterElement {
  css() { return `
    .cols { display: flex; padding: 0 1px; } .main { flex: 1; border-right: 1px solid #777; }
    .cols > scroll-strip { width: 17px; } .foot { height: 15px; border-top: 1px solid #777; }
    .selects { display: flex; gap: 7px; padding: 4px 10px 4px 7px; }
    .sel { flex: 1; display: flex; align-items: center; height: 18px; background: #fff; border: 1px solid #888; padding-right: 1px; }
    select { appearance: none; flex: 1; width: 0; padding-left: 5px; color: #777; opacity: 1; line-height: 16px; height: 16px; }
    .sel i { width: 13px; height: 14px; display: grid; place-items: center; border: 1px solid #aaa; background: #f2f2f2; }
    .opacity { display: flex; align-items: flex-start; gap: 2px; padding: 0 10px 0 5px; height: 20px; }
    bevel-slider { flex: 1; margin: 3px 0 0 7px; }
    .opacity input { width: 40px; height: 14px; margin-top: 3px; background: #fff; border: 1px solid #888; text-align: right; padding: 1px 6px 0 0; line-height: 13px; color: #777; }
    .checks { display: flex; align-items: flex-end; justify-content: space-between; padding: 0 25px 1px 6px; color: #7a7a7a; }
    .checks label { display: flex; align-items: center; gap: 4px; height: 14px; line-height: 14px; }
    .checks input { appearance: none; width: 13px; height: 13px; background: #878787; border: 1px solid #7b7b7b; }
    .lk { padding-bottom: 5px; }
    .tools { display: flex; gap: 2px; height: 22px; align-items: center; padding: 0 25px 0 8px; } .tools button:last-child { margin-left: auto; }`; }
  html() { return `<palette-frame><div class="cols"><div class="main">
      <panel-section label="图层" open>
        <div class="selects"><div class="sel"><select disabled aria-label="合成方式"><option>默认</option></select><i>${icon('graysmall')}</i></div>
          <div class="sel"><select disabled aria-label="合成深度"><option>忽略</option></select><i>${icon('graysmall')}</i></div></div>
        <div class="opacity">${icon('composite')}<bevel-slider off value="100" label="不透明度"></bevel-slider><input disabled value="100%" aria-label="不透明度"></div>
        <div class="checks"><div><label><input type="checkbox" disabled>保持透明度</label><label><input type="checkbox" disabled>从下层采集颜色</label></div><div class="lk">${icon('lockoff')}</div></div>
        <layer-list></layer-list>
        <div class="tools">${['layers', 'plug', 'newlayer', 'water', 'ink', 'mask', 'trash'].map(n => btn(n, n)).join('')}</div>
      </panel-section>
      <panel-section label="通道"></panel-section>
    </div><scroll-strip></scroll-strip></div><div class="foot"></div></palette-frame>`; }
}

class DocumentWindow extends PainterElement {
  css() { return `
    :host { display: flex; flex-direction: column; padding: 0 2px 3px; border: 1px solid #123c46; border-radius: 6px 6px 0 0; font-size: 14px;
      box-shadow: inset 1px 1px #fff, inset -1px -1px #5fd0dc;
      background: linear-gradient(100deg, #c4d5e7 0, #a3bfdc 8%, #a8c4e0 38%, #8fb0d4 42%, #a6bfdb 48%, #c3d3e5 52%, #a1bedb 57%, #9fbddc 66%, #b7cee5 72%, #b7cee5 80%, #d6e3f0 90%, #d8e4f1 100%); }
    header { display: flex; align-items: center; gap: 3px; height: 25px; padding: 1px 15px 0 4px; }
    h2 { flex: 1; }
    .view { flex: 1; display: flex; border: 1px solid #333; border-bottom: 0; border-right: 0; min-height: 0; }
    .canvas { flex: 1; background: #fff; border-right: 2px solid #555; }
    .side { display: flex; flex-direction: column; width: 16px; gap: 1px; background: #e9e9e9; align-items: center; }
    .side scroll-strip { flex: 1; }
    .status { display: flex; align-items: center; height: 16px; border-top: 2px solid #555; background: #fff; font-size: 12px; gap: 2px; padding-left: 2px; }
    .status > scroll-strip { flex: 1; height: 14px; padding-right: 16px; }
    .status bevel-slider { width: 129px; margin-left: 2px; flex: none; }
    .status output { width: 38px; padding-left: 2px; line-height: 14px; font-family: "Liberation Sans", sans-serif; }`; }
  html() { return `
    <header>${icon('doc')}<h2>未标题-6 @ 66%</h2><window-controls></window-controls></header>
    <div class="view"><div class="canvas"></div>
      <div class="side">${btn('tracing', '描图')}${btn('grid', '网格')}${btn('colors', '颜色管理')}${btn('star', '厚涂')}<scroll-strip thumb></scroll-strip></div></div>
    <div class="status">${btn('ball', '预览')}${btn('bino', '导航')}${btn('lens', '缩放')}<bevel-slider value="56" label="缩放"></bevel-slider><output>66%</output><scroll-strip row thumb></scroll-strip></div>`; }
}

class SiteMark extends PainterElement {
  css() { return `
    :host { display: flex; color: #fff; align-items: flex-end; }
    .t { text-align: right; margin-left: -16px; padding-bottom: 1px; }
    .cn { font: bold 23px/26px "Noto Sans CJK SC", sans-serif; }
    .en { font: 11px/12px "Liberation Serif", serif; }`; }
  html() { return `<svg width="82" height="48" viewBox="0 0 82 48">
      <path d="M0 24L42 0l16 9v6L42 9 20 23H0z" fill="#fff"/>
      <path d="M14 22l8-4v25h8v4H14z" fill="#fff"/><path d="M24 25h8v6h-8zM24 33h8v7h-8z" fill="#fff" fill-opacity=".95"/>
      <path d="M36 20q8-5 16-5v4q-8 0-13 5h13v4H39v5q8-3 14-2v4q-8 0-14 3h14v4q-9 0-15 5H22v-4h12V26z" fill="#fff"/>
      <path d="M54 14h5v5h-5zM60 18h5v5h-5zM55 22h5v5h-5zM61 27h6v6h-6zM55 31h5v5h-5zM60 36h5v5h-5zM67 22h3v3h-3z" fill="#fff"/>
    </svg><div class="t"><div class="cn">系统之家</div><div class="en">XITONGZHIJIA.NET</div></div>`; }
}

class PainterApp extends PainterElement {
  css() { return `
    :host { display: flex; flex-direction: column; height: 100vh; box-sizing: border-box; padding: 1px; background: #000; }
    .desk { flex: 1; position: relative; background: #828282; min-height: 0; overflow: hidden; }
    .desk > * { position: absolute; }
    tool-palette { left: 0; top: 1px; width: 64px; }
    document-window { left: 156px; right: 375px; top: 59px; bottom: 124px; }
    .dock { right: 0; top: 1px; width: 223px; display: flex; flex-direction: column; gap: 1px; }
    site-mark { right: 8px; bottom: 7px; }`; }
  html() { return `<title-bar></title-bar><menu-bar></menu-bar><property-bar></property-bar>
    <main class="desk"><document-window></document-window><tool-palette></tool-palette>
      <div class="dock"><color-panel></color-panel><layers-panel></layers-panel></div><site-mark></site-mark></main>`; }
}

for (const [name, cls] of Object.entries({
  'ui-icon': UiIcon, 'window-controls': WindowControls, 'title-bar': TitleBar, 'menu-bar': MenuBar, 'number-field': NumberField,
  'property-bar': PropertyBar, 'palette-frame': PaletteFrame, 'tool-palette': ToolPalette, 'bevel-slider': BevelSlider, 'channel-row': ChannelRow,
  'panel-section': PanelSection, 'scroll-strip': ScrollStrip, 'color-wheel': ColorWheel, 'color-panel': ColorPanel, 'layer-list': LayerList,
  'layers-panel': LayersPanel, 'document-window': DocumentWindow, 'site-mark': SiteMark, 'painter-app': PainterApp,
})) customElements.define(name, cls);
</script>
</body>
</html>
